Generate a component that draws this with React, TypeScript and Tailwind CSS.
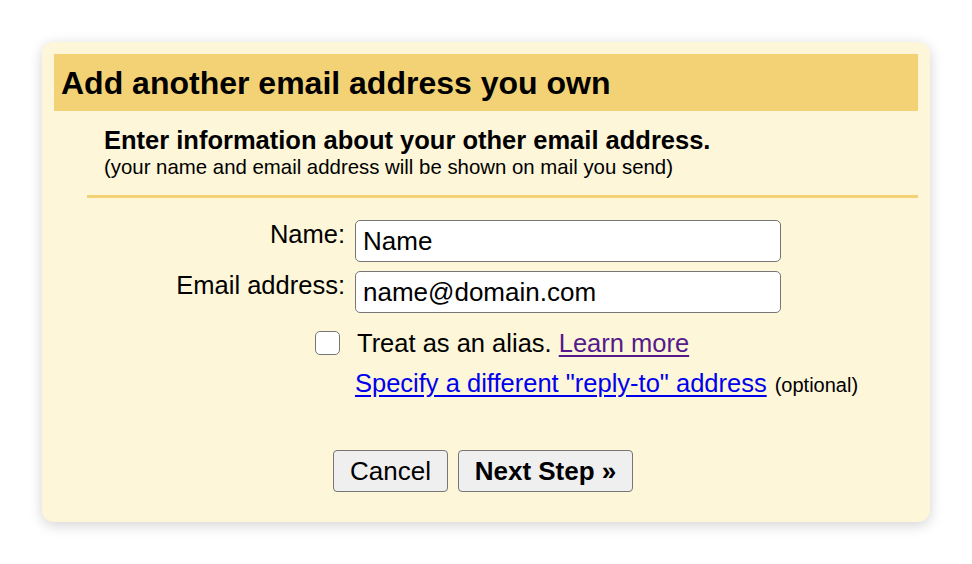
import { useState } from 'react';

const FONT = "font-['Liberation_Sans',Arial,sans-serif]";

function Field({ label, defaultValue }: { label: string; defaultValue: string }) {
  return (
    <div className="flex items-start">
      <label className="w-[301px] shrink-0 pr-[10px] text-right text-[25.5px] leading-[28px] text-black">
        {label}
      </label>
      <input
        defaultValue={defaultValue}
        className="h-[42px] w-[426px] rounded-[5px] border-[1.5px] border-[#767676] bg-white px-[7px] text-[26px] text-black outline-none"
      />
    </div>
  );
}

export default function App() {
  const [alias, setAlias] = useState(false);

  return (
    <div className={`h-[564px] w-full bg-white pl-[42px] pt-[42px] ${FONT}`}>
      <div className="h-[480px] w-[888px] rounded-[12px] bg-[#fdf6d9] p-[12px] shadow-[0_3px_14px_rgba(0,0,0,0.18)]">
        {/* header band */}
        <div className="flex h-[57px] items-center bg-[#f3d276] pl-[7px]">
          <h1 className="text-[32px] font-bold leading-none text-black">Add another email address you own</h1>
        </div>

        {/* intro */}
        <div className="ml-[50px] mt-[15px]">
          <p className="text-[25.5px] font-bold leading-[29px] text-black">
            Enter information about your other email address.
          </p>
          <p className="text-[20.4px] leading-[24px] text-black">
            (your name and email address will be shown on mail you send)
          </p>
        </div>

        <div className="ml-[33px] mt-[16px] h-[3px] bg-[#f3d276]" />

        {/* form */}
        <div className="mt-[22px] flex flex-col gap-[9px]">
          <Field label="Name:" defaultValue="Name" />
          <Field label="Email address:" defaultValue="name@domain.com" />
        </div>

        <div className="mt-[15px] flex items-center">
          <div className="flex w-[291px] shrink-0 justify-end pr-[5px]">
            <button
              onClick={() => setAlias(!alias)}
              className="h-[24px] w-[25px] rounded-[5px] border-[1.5px] border-[#767676] bg-white"
              aria-label="Treat as an alias"
            />
          </div>
          <span className="pl-[12px] text-[25.5px] leading-[30px] text-black">
            Treat as an alias.{' '}
            <a href="#" className="text-[#551a8b] underline underline-offset-[3px]">
              Learn more
            </a>
          </span>
        </div>

        <div className="mt-[10px] flex items-baseline pl-[301px]">
          <a href="#" className="text-[25.5px] leading-[30px] text-[#0000ee] underline underline-offset-[3px]">
            Specify a different "reply-to" address
          </a>
          <span className="ml-[8px] text-[20px] text-black">(optional)</span>
        </div>

        {/* actions */}
        <div className="mt-[50px] flex justify-center gap-[10px] pr-[6px]">
          <button className="h-[42px] w-[115px] rounded-[4px] border-[1.5px] border-[#767676] bg-[#efefef] text-[26px] text-black">
            Cancel
          </button>
          <button className="h-[42px] w-[175px] rounded-[4px] border-[1.5px] border-[#767676] bg-[#efefef] text-[26px] font-bold text-black">
            Next Step »
          </button>
        </div>
      </div>
    </div>
  );
}
